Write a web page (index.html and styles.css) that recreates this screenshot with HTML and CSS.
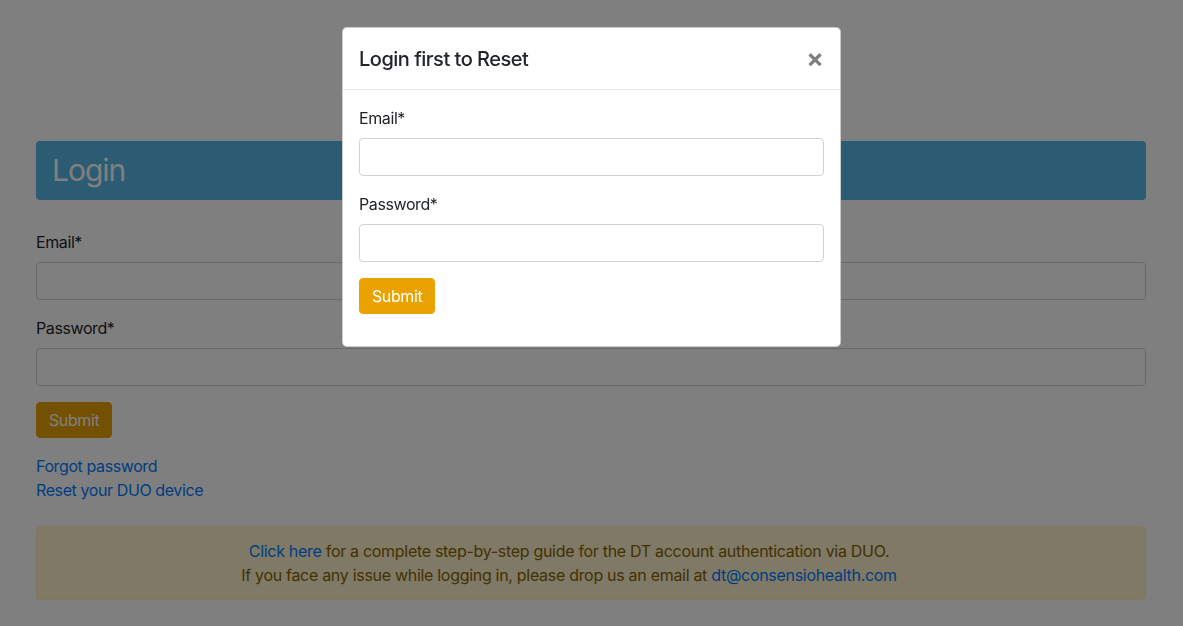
FILE: index.html
```html
<!DOCTYPE html>
<html lang="en">
<head>
    <meta charset="UTF-8">
    <meta name="viewport" content="width=device-width, initial-scale=1.0">
    <title>Login</title>
    <link rel="stylesheet" href="styles.css">
</head>
<body>
    <div class="container">
        <div class="page-title">Login</div>
        <form class="login-form">
            <div class="form-group">
                <label for="email">Email*</label>
                <input type="email" id="email" class="form-control">
            </div>
            <div class="form-group">
                <label for="password">Password*</label>
                <input type="password" id="password" class="form-control">
            </div>
            <button type="button" class="btn">Submit</button>
        </form>
        <div class="links">
            <a href="#">Forgot password</a><br>
            <a href="#">Reset your DUO device</a>
        </div>
        <div class="alert">
            <a href="#">Click here</a> for a complete step-by-step guide for the DT account authentication via DUO.<br>
            If you face any issue while logging in, please drop us an email at <a href="#">dt@consensiohealth.com</a>
        </div>
    </div>

    <div class="backdrop"></div>
    <div class="modal">
        <div class="modal-dialog">
            <div class="modal-header">
                <h5 class="modal-title">Login first to Reset</h5>
                <button type="button" class="close">&times;</button>
            </div>
            <div class="modal-body">
                <div class="form-group">
                    <label for="reset-email">Email*</label>
                    <input type="email" id="reset-email" class="form-control">
                </div>
                <div class="form-group">
                    <label for="reset-password">Password*</label>
                    <input type="password" id="reset-password" class="form-control">
                </div>
                <button type="button" class="btn">Submit</button>
            </div>
        </div>
    </div>
</body>
</html>
```

FILE: styles.css
```css
* {
    box-sizing: border-box;
}
body {
    margin: 0;
    font-family: Inter, "Liberation Sans", Arial, sans-serif;
    font-size: 16px;
    line-height: 24px;
    letter-spacing: -0.4px;
    color: #212529;
    background-color: #fff;
    overflow: hidden;
}
a {
    color: #007bff;
    text-decoration: none;
}
.container {
    width: 1110px;
    margin: 0 36px;
    padding-top: 141px;
}
.page-title {
    height: 59px;
    padding: 0 16px;
    font-size: 30px;
    line-height: 59px;
    letter-spacing: -1px;
    color: #fff;
    background-color: #59b6e8;
    border-radius: 4px;
    margin-bottom: 30px;
}
.form-group {
    margin-bottom: 16px;
}
label {
    display: block;
    margin-bottom: 8px;
}
.form-control {
    display: block;
    width: 100%;
    height: 38px;
    padding: 6px 12px;
    font-size: 16px;
    border: 1px solid #ced4da;
    border-radius: 4px;
    background-color: #fff;
}
.btn {
    display: inline-block;
    height: 36px;
    padding: 0 12px;
    font-family: inherit;
    font-size: 16px;
    line-height: 34px;
    letter-spacing: -0.4px;
    color: #fff;
    background-color: #e9a200;
    border: 1px solid #e9a200;
    border-radius: 4px;
}
.links {
    margin-top: 16px;
    margin-bottom: 24px;
}
.alert {
    padding: 12px 64px 12px 20px;
    text-align: center;
    letter-spacing: -0.3px;
    color: #856404;
    background-color: #fff3cd;
    border: 1px solid #ffeeba;
    border-radius: 4px;
}
.backdrop {
    position: fixed;
    inset: 0;
    background-color: rgba(0, 0, 0, 0.5);
}
.modal {
    position: fixed;
    inset: 0;
    display: flex;
    justify-content: center;
    align-items: flex-start;
    padding-top: 27px;
}
.modal-dialog {
    width: 499px;
    background-color: #fff;
    border: 1px solid rgba(0, 0, 0, 0.2);
    border-radius: 5px;
}
.modal-header {
    display: flex;
    justify-content: space-between;
    align-items: center;
    padding: 16px 16px 15px;
    border-bottom: 1px solid #e9ecef;
}
.modal-title {
    margin: 0;
    font-size: 20px;
    font-weight: 500;
    line-height: 30px;
    letter-spacing: -0.5px;
}
.close {
    padding: 0;
    font-family: inherit;
    font-size: 26px;
    font-weight: 700;
    line-height: 1;
    color: #000;
    opacity: 0.5;
    background: none;
    border: 0;
}
.modal-body {
    padding: 16px 16px 32px;
}
```
